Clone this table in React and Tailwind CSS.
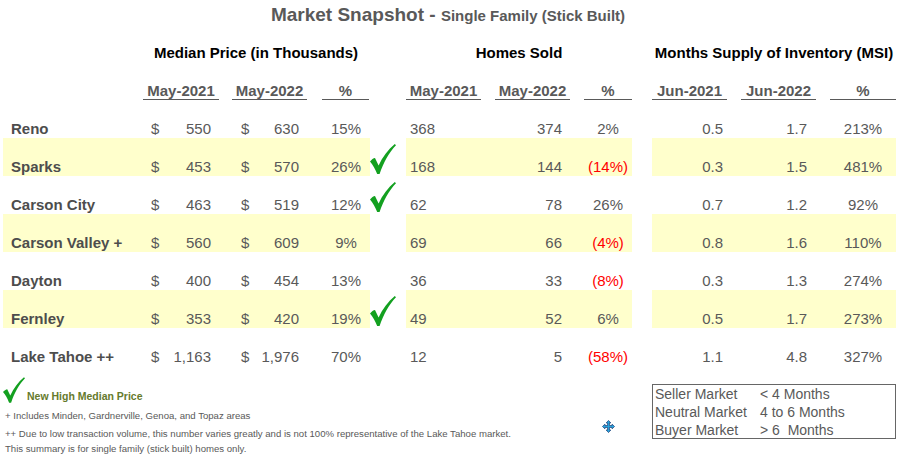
import React from 'react';

const rows = [
  { name: 'Reno', p1: '550', p2: '630', pp: '15%', check: false, h1: '368', h2: '374', hp: '2%', neg: false, m1: '0.5', m2: '1.7', mp: '213%', hl: false },
  { name: 'Sparks', p1: '453', p2: '570', pp: '26%', check: true, h1: '168', h2: '144', hp: '(14%)', neg: true, m1: '0.3', m2: '1.5', mp: '481%', hl: true },
  { name: 'Carson City', p1: '463', p2: '519', pp: '12%', check: true, h1: '62', h2: '78', hp: '26%', neg: false, m1: '0.7', m2: '1.2', mp: '92%', hl: false },
  { name: 'Carson Valley +', p1: '560', p2: '609', pp: '9%', check: false, h1: '69', h2: '66', hp: '(4%)', neg: true, m1: '0.8', m2: '1.6', mp: '110%', hl: true },
  { name: 'Dayton', p1: '400', p2: '454', pp: '13%', check: false, h1: '36', h2: '33', hp: '(8%)', neg: true, m1: '0.3', m2: '1.3', mp: '274%', hl: false },
  { name: 'Fernley', p1: '353', p2: '420', pp: '19%', check: true, h1: '49', h2: '52', hp: '6%', neg: false, m1: '0.5', m2: '1.7', mp: '273%', hl: true },
  { name: 'Lake Tahoe ++', p1: '1,163', p2: '1,976', pp: '70%', check: false, h1: '12', h2: '5', hp: '(58%)', neg: true, m1: '1.1', m2: '4.8', mp: '327%', hl: false },
];

const Check = ({ className }) => (
  <svg viewBox="0 0 26 30" className={className}>
    <path
      d="M0 17.5 C1.5 15.5 3.5 14.2 5 14 L8.6 21.5 C12.5 13 18 5.5 24.8 0 L26 1.2 C19 8.5 13.5 18.5 9.6 30 L7.2 30 C5.2 25 3 21 0 17.5 Z"
      fill="#13a020"
    />
  </svg>
);

const MoveIcon = () => (
  <svg viewBox="0 0 14 14" className="w-[13px] h-[13px]">
    <path
      d="M7 0.5 L9.5 3.2 L8 3.2 L8 6 L10.8 6 L10.8 4.5 L13.5 7 L10.8 9.5 L10.8 8 L8 8 L8 10.8 L9.5 10.8 L7 13.5 L4.5 10.8 L6 10.8 L6 8 L3.2 8 L3.2 9.5 L0.5 7 L3.2 4.5 L3.2 6 L6 6 L6 3.2 L4.5 3.2 Z"
      fill="#2aa8e0"
      stroke="#1d3f7a"
      strokeWidth="0.8"
      strokeLinejoin="round"
    />
  </svg>
);

const Row = ({ r }) => {
  const band = r.hl ? 'bg-[#ffffcc]' : '';
  return (
    <div className="flex h-[38px] pl-[3px] text-[15px] leading-[17px] text-[#595959]">
      {/* Median price */}
      <div className={`flex items-end pb-[1px] w-[367px] ${band}`}>
        <div className="w-[148px] pl-[8px] font-bold text-[#4d4d4d]">{r.name}</div>
        <div className="w-[12px]">$</div>
        <div className="w-[48px] text-right">{r.p1}</div>
        <div className="w-[30px]" />
        <div className="w-[12px]">$</div>
        <div className="w-[46px] text-right">{r.p2}</div>
        <div className="w-[23px]" />
        <div className="w-[48px] text-center">{r.pp}</div>
      </div>
      {/* check column */}
      <div className="w-[36px] flex items-end pb-[2px]">
        {r.check && <Check className="w-[26px] h-[30px]" />}
      </div>
      {/* Homes sold */}
      <div className={`flex items-end pb-[1px] w-[226px] ${band}`}>
        <div className="w-[74px] pl-[4px]">{r.h1}</div>
        <div className="w-[82px] text-right">{r.h2}</div>
        <div className="w-[22px]" />
        <div className={`w-[48px] text-center ${r.neg ? 'text-[#ff0000]' : ''}`}>{r.hp}</div>
      </div>
      <div className="w-[20px]" />
      {/* MSI */}
      <div className={`flex items-end pb-[1px] w-[244px] ${band}`}>
        <div className="w-[71px] text-right">{r.m1}</div>
        <div className="w-[84px] text-right">{r.m2}</div>
        <div className="w-[23px]" />
        <div className="w-[66px] text-center">{r.mp}</div>
      </div>
    </div>
  );
};

const Sub = ({ w, children }) => (
  <div className={`${w} h-[17px] leading-[16px] border-b border-[#595959] text-center`}>{children}</div>
);

export default function App() {
  return (
    <div className="w-[900px] h-[456px] bg-white overflow-hidden font-['Liberation_Sans',Arial,sans-serif]">
      {/* Title */}
      <div className="pt-[4px] text-center font-bold text-[#595959] leading-[22px] pr-[4px]">
        <span className="text-[19px]">Market Snapshot - </span>
        <span className="text-[15px]">Single Family (Stick Built)</span>
      </div>

      {/* Section headers */}
      <div className="flex mt-[17px] text-[15px] leading-[17px] font-bold text-black">
        <div className="w-[143px]" />
        <div className="w-[226px] text-center">Median Price (in Thousands)</div>
        <div className="w-[37px]" />
        <div className="w-[226px] text-center">Homes Sold</div>
        <div className="w-[20px]" />
        <div className="w-[244px] text-center">Months Supply of Inventory (MSI)</div>
      </div>

      {/* Sub headers */}
      <div className="flex mt-[22px] text-[15px] font-bold text-[#595959]">
        <div className="w-[143px]" />
        <Sub w="w-[76px]">May-2021</Sub>
        <div className="w-[13px]" />
        <Sub w="w-[75px]">May-2022</Sub>
        <div className="w-[15px]" />
        <Sub w="w-[47px]">%</Sub>
        <div className="w-[37px]" />
        <Sub w="w-[75px]">May-2021</Sub>
        <div className="w-[14px]" />
        <Sub w="w-[75px]">May-2022</Sub>
        <div className="w-[14px]" />
        <Sub w="w-[48px]">%</Sub>
        <div className="w-[20px]" />
        <Sub w="w-[75px]">Jun-2021</Sub>
        <div className="w-[14px]" />
        <Sub w="w-[75px]">Jun-2022</Sub>
        <div className="w-[14px]" />
        <Sub w="w-[66px]">%</Sub>
      </div>

      {/* Data rows */}
      <div>
        {rows.map((r) => (
          <Row key={r.name} r={r} />
        ))}
      </div>

      {/* Footer */}
      <div className="flex">
        <div className="w-[596px] pt-[10px]">
          <div className="flex items-end pl-[3px]">
            <Check className="w-[22px] h-[28px]" />
            <div className="ml-[2px] mb-[1px] text-[10.5px] leading-[13px] font-bold text-[#667a2c]">New High Median Price</div>
          </div>
          <div className="pl-[5px] text-[9.6px] text-[#595959]">
            <div className="mt-[4px] leading-[16px]">+ Includes Minden, Gardnerville, Genoa, and Topaz areas</div>
            <div className="mt-[2px] leading-[15px]">
              ++ Due to low transaction volume, this number varies greatly and is not 100% representative of the Lake Tahoe market.
            </div>
            <div className="leading-[15px]">This summary is for single family (stick built) homes only.</div>
          </div>
        </div>
        <div className="w-[56px] pt-[54px] pl-[6px]">
          <MoveIcon />
        </div>
        <div className="mt-[18px] w-[244px] h-[55px] border border-[#666666] pl-[2px] text-[14px] leading-[18px] text-[#595959]">
          <div className="flex"><div className="w-[105px]">Seller Market</div><div>&lt; 4 Months</div></div>
          <div className="flex"><div className="w-[105px]">Neutral Market</div><div>4 to 6 Months</div></div>
          <div className="flex"><div className="w-[105px]">Buyer Market</div><div>&gt; 6&nbsp; Months</div></div>
        </div>
      </div>
    </div>
  );
}
